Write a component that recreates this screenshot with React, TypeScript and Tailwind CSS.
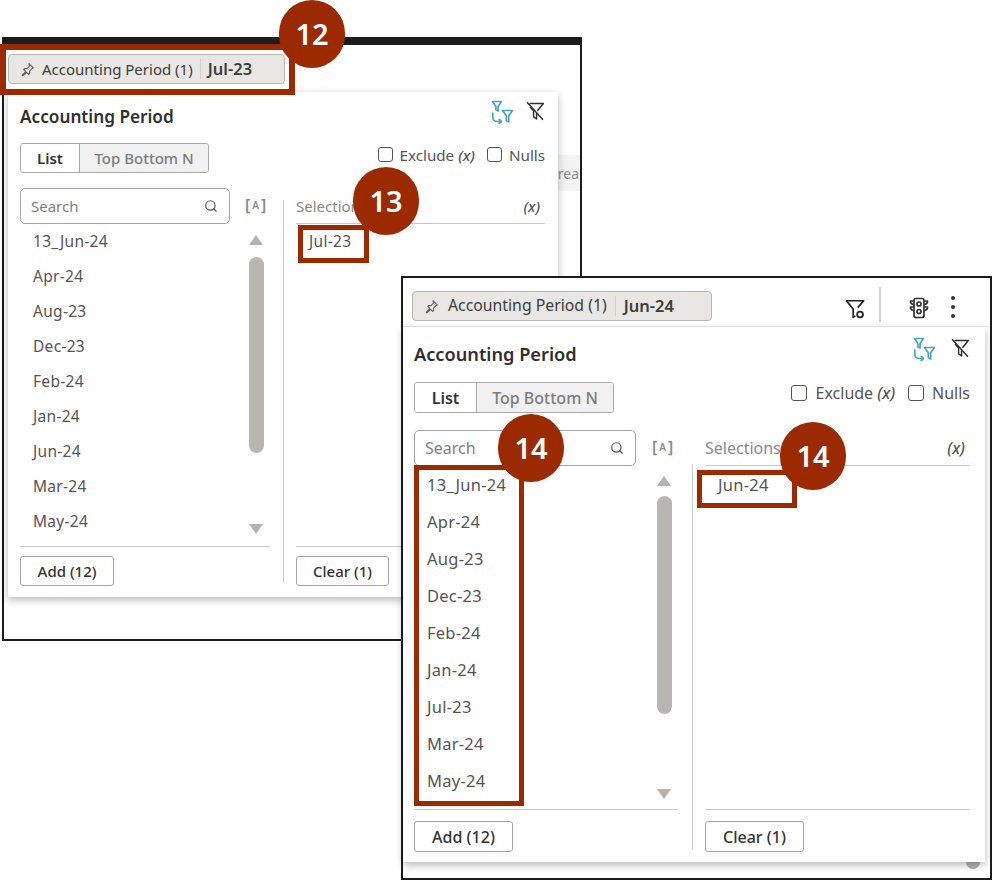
import React from "react";
import { Search } from "lucide-react";

const PinIcon = ({ className }: { className: string }) => (
  <svg viewBox="0 0 16 16" className={className} fill="none" stroke="#5f5f5f" strokeWidth="1.2">
    <path d="M9.6 1.8l4.6 4.6-1.2.5-2.6 2.6-.2 2.8-1 .9-2.2-2.2-3.6 3.6-.9.1.1-.9 3.6-3.6-2.2-2.2.9-1 2.8-.2 2.6-2.6z" strokeLinejoin="round" />
  </svg>
);

const SwapFilterIcon = ({ className }: { className: string }) => (
  <svg viewBox="0 0 24 24" className={className} fill="none" stroke="#4aa3bd" strokeWidth="1.7" strokeLinejoin="round" strokeLinecap="round">
    <path d="M2.5 1.5h9l-3.4 5v4.5l-2.2-1.2V6.500z" />
    <path d="M12.500 10.500h10l-3.800 5.200v6.300l-2.400-1.400v-4.900z" />
    <path d="M2.800 13v4.500c0 2.300 2 4 4.500 4h4" />
    <path d="M9.200 19.300l2.200 2.200-2.200 2" />
  </svg>
);

const NoFilterIcon = ({ className }: { className: string }) => (
  <svg viewBox="0 0 24 24" className={className} fill="none" stroke="#333333" strokeWidth="1.8" strokeLinejoin="round" strokeLinecap="round">
    <path d="M6 3h16l-6.600 8.200" />
    <path d="M6.500 7.500l3.800 4.500v7l3.600 2.500v-6.500" />
    <path d="M3 2l18 20" />
  </svg>
);

const GearFilterIcon = () => (
  <svg viewBox="0 0 24 24" className="w-[22px] h-[22px]" fill="none" stroke="#222222" strokeWidth="1.9" strokeLinejoin="round">
    <path d="M2.500 3h19l-6.500 7.500" />
    <path d="M2.500 3l7.500 9v9l2.500-1.500" />
    <circle cx="17.500" cy="18" r="3.200" />
  </svg>
);

const TrafficIcon = () => (
  <svg viewBox="0 0 24 24" className="w-[24px] h-[24px]" fill="none" stroke="#333333" strokeWidth="1.700" strokeLinejoin="round">
    <rect x="7" y="2.500" width="10" height="19" rx="2" />
    <circle cx="12" cy="8" r="2" />
    <circle cx="12" cy="15.500" r="2" />
    <path d="M7 5H3.500c0 2 1.500 3.500 3.500 3.500M17 5h3.500c0 2-1.500 3.500-3.500 3.500M7 11H3.500c0 2 1.500 3.500 3.500 3.500M17 11h3.500c0 2-1.500 3.500-3.500 3.500" />
  </svg>
);

const Badge = ({ n, className }: { n: number; className: string }) => (
  <div className={`absolute z-20 flex items-center justify-center rounded-full bg-[#9c2a00] text-white font-semibold text-[29px] w-[66px] h-[68px] ${className}`}>
    {n}
  </div>
);

const RedBox = ({ className }: { className: string }) => (
  <div className={`absolute z-10 border-[#9c2a00] ${className}`}></div>
);

interface PillProps {
  value: string;
  className: string;
  label: string;
  iconGap: string;
  sepGap: string;
}

const Pill = ({ value, className, label, iconGap, sepGap }: PillProps) => (
  <div className={`flex items-center h-[30px] rounded-[4px] border border-[#b9b7b3] bg-[#e9e7e4] text-[#3d3d3d] ${className}`}>
    <PinIcon className={`w-[15px] h-[15px] ml-[11px] ${iconGap}`} />
    <span className={label}>Accounting Period (1)</span>
    <span className={`w-px h-[20px] bg-[#d2d0cc] ${sepGap}`}></span>
    <span className="font-semibold text-[16.5px]">{value}</span>
  </div>
);

interface PanelSizes {
  panel: string;
  header: string;
  title: string;
  iconGap: string;
  tabsRow: string;
  tabText: string;
  checks: string;
  boxA: string;
  boxB: string;
  columns: string;
  listCol: string;
  gapCol: string;
  rightCol: string;
  text: string;
  list: string;
  row: string;
  item: string;
  scroll: string;
  thumb: string;
  arrowDown: string;
  foot: string;
  tabList: string;
  tabOther: string;
  addBtn: string;
  clearBtn: string;
  searchW: string;
  bracket: string;
  divider: string;
}

interface PanelProps {
  items: string[];
  selection: string;
  sizes: PanelSizes;
}

const FilterPanel: React.FC<PanelProps> = ({ items, selection, sizes }) => {
  return (
    <div className={`relative z-[1] bg-white shadow-[0_3px_8px_rgba(0,0,0,0.28)] ${sizes.panel}`}>
      <div className={`flex justify-between ${sizes.header}`}>
        <h2 className={`font-semibold text-[#2f2f2f] leading-[24px] ${sizes.title}`}>Accounting Period</h2>
        <div className={`flex -mt-[5px] ${sizes.iconGap}`}>
          <SwapFilterIcon className="w-[24px] h-[24px]" />
          <NoFilterIcon className="w-[20px] h-[20px] mt-[1px]" />
        </div>
      </div>

      <div className={`flex justify-between ${sizes.tabsRow}`}>
        <div className={`flex h-full border border-[#a9a9a9] rounded-[3px] overflow-hidden ${sizes.tabText}`}>
          <div className={`flex items-center justify-center font-semibold text-[#333333] bg-white ${sizes.tabList}`}>List</div>
          <div className={`flex items-center justify-center font-medium text-[#7d7d7d] bg-[#f1f1f1] border-l border-[#a9a9a9] ${sizes.tabOther}`}>Top Bottom N</div>
        </div>
        <div className={`flex items-start leading-[22px] text-[#555555] ${sizes.checks}`}>
          <span className={`mt-[3px] border-[1.5px] border-[#555555] rounded-[3px] ${sizes.boxA}`}></span>
          <span>Exclude <i className="font-medium">(x)</i></span>
          <span className={`mt-[3px] border-[1.5px] border-[#555555] rounded-[3px] ${sizes.boxB}`}></span>
          <span>Nulls</span>
        </div>
      </div>

      <div className={`flex ${sizes.columns}`}>
        <div className={sizes.listCol}>
          <div className="flex h-[36px]">
            <div className={`flex items-center justify-between h-full border border-[#a3a3a3] rounded-[5px] pl-[10px] pr-[11px] text-[#7f7f7f] ${sizes.text} ${sizes.searchW}`}>
              <span>Search</span>
              <Search size={14} color="#555555" strokeWidth={2} />
            </div>
            <span className={`flex items-center h-[34px] font-semibold text-[16px] text-[#8a8a8a] ${sizes.bracket}`}>
              [<span className="text-[10px] mx-[2px]">A</span>]
            </span>
          </div>
          <div className={`flex justify-between ${sizes.list}`}>
            <ul>
              {items.map((item) => (
                <li key={item} className={`flex items-center pl-[13px] text-[#555555] ${sizes.item} ${sizes.row}`}>{item}</li>
              ))}
            </ul>
            <div className={`flex flex-col items-center w-[16px] ${sizes.scroll}`}>
              <span className="w-0 h-0 border-x-[7px] border-x-transparent border-b-[10px] border-b-[#b7b4b0]"></span>
              <span className={`w-[15px] rounded-full bg-[#b9b6b2] ${sizes.thumb}`}></span>
              <span className={`w-0 h-0 border-x-[7px] border-x-transparent border-t-[10px] border-t-[#b7b4b0] ${sizes.arrowDown}`}></span>
            </div>
          </div>
          <div className={`border-t border-[#c9c9c9] ${sizes.foot}`}>
            <button className={`border border-[#a3a3a3] rounded-[3px] font-medium text-[#333333] ${sizes.text} ${sizes.addBtn}`}>Add (12)</button>
          </div>
        </div>

        <div className={`w-px bg-[#cfcfcf] ${sizes.gapCol} ${sizes.divider}`}></div>

        <div className={sizes.rightCol}>
          <div className={`flex items-center justify-between h-[36px] pt-[1px] border-b border-[#c9c9c9] text-[#8a8a8a] ${sizes.text}`}>
            <span>Selections</span>
            <i className="text-[#555555] font-medium pr-[5px]">(x)</i>
          </div>
          <div className={sizes.list}>
            <div className={`flex items-center pl-[13px] text-[#555555] ${sizes.item} ${sizes.row}`}>{selection}</div>
          </div>
          <div className={`border-t border-[#c9c9c9] ${sizes.foot}`}>
            <button className={`border border-[#a3a3a3] rounded-[3px] font-medium text-[#333333] ${sizes.text} ${sizes.clearBtn}`}>Clear (1)</button>
          </div>
        </div>
      </div>
    </div>
  );
};

const backSizes: PanelSizes = {
  panel: "ml-[4px] w-[550px] h-[505px] pl-[12px] pr-[13px]",
  header: "pt-[13px] h-[51px]",
  title: "text-[17.2px]",
  iconGap: "gap-[11px]",
  tabsRow: "h-[30px]",
  tabText: "text-[15px]",
  checks: "text-[15.2px] mt-[1px]",
  boxA: "w-[15px] h-[15px] mr-[7px]",
  boxB: "w-[15px] h-[15px] ml-[12px] mr-[7px]",
  columns: "mt-[15px]",
  listCol: "w-[250px]",
  gapCol: "ml-[13px] mr-[12px]",
  rightCol: "w-[249px]",
  text: "text-[15px]",
  list: "h-[322px]",
  row: "h-[35px]",
  item: "text-[15.5px] tracking-[0.3px]",
  scroll: "pt-[11px] mr-[6px]",
  thumb: "h-[196px] mt-[12px]",
  arrowDown: "mt-[71px]",
  foot: "pt-[9px]",
  tabList: "w-[58px]",
  tabOther: "w-[129px]",
  addBtn: "w-[94px] h-[30px]",
  clearBtn: "w-[93px] h-[30px]",
  searchW: "w-[210px]",
  bracket: "ml-[15px]",
  divider: "mt-[12px] h-[383px]",
};

const frontSizes: PanelSizes = {
  panel: "w-[582px] h-[535px] pl-[11px] pr-[15px]",
  header: "pt-[15px] h-[55px]",
  title: "text-[18.2px]",
  iconGap: "gap-[14px]",
  tabsRow: "h-[31px]",
  tabText: "text-[16px]",
  checks: "text-[16px]",
  boxA: "w-[16px] h-[16px] mr-[9px]",
  boxB: "w-[16px] h-[16px] ml-[13px] mr-[8px]",
  columns: "mt-[17px]",
  listCol: "w-[264px]",
  gapCol: "ml-[14px] mr-[12px]",
  rightCol: "w-[265px]",
  text: "text-[16px]",
  list: "h-[343px]",
  row: "h-[37px] pt-[2px]",
  item: "text-[16.5px] tracking-[0.25px]",
  scroll: "pt-[10px] mr-[6px]",
  thumb: "h-[218px] mt-[10px]",
  arrowDown: "mt-[75px]",
  foot: "pt-[11px]",
  tabList: "w-[61px]",
  tabOther: "w-[137px]",
  addBtn: "w-[99px] h-[31px]",
  clearBtn: "w-[99px] h-[31px]",
  searchW: "w-[222px]",
  bracket: "ml-[16px]",
  divider: "mt-[34px] h-[386px]",
};

export default function App() {
  const backItems = ["13_Jun-24", "Apr-24", "Aug-23", "Dec-23", "Feb-24", "Jan-24", "Jun-24", "Mar-24", "May-24"];
  const frontItems = ["13_Jun-24", "Apr-24", "Aug-23", "Dec-23", "Feb-24", "Jan-24", "Jul-23", "Mar-24", "May-24"];

  return (
    <div className="relative w-[992px] h-[880px] overflow-hidden bg-white font-['Noto_Sans',sans-serif]">
      {/* back window */}
      <div className="absolute left-[2px] top-[37px] w-[580px] h-[604px] border-2 border-t-[8px] border-[#1c1c1c] bg-white">
        <div className="flex h-[47px] pt-[9px] pl-[4px]">
          <Pill value="Jul-23" className="w-[277px]" label="text-[15px]" iconGap="mr-[7px]" sepGap="mx-[7px]" />
        </div>
        <FilterPanel items={backItems} selection="Jul-23" sizes={backSizes} />
        <div className="absolute left-[550px] top-[110px] w-[26px] h-[36px] bg-[#f4f4f4] text-[14px] text-[#8a8a8a] flex items-center">
          <span className="-ml-[4px]">area</span>
        </div>
      </div>
      <RedBox className="left-0 top-[44px] w-[295px] h-[51px] border-[6px]" />
      <Badge n={12} className="left-[279px] top-0" />
      <RedBox className="left-[298px] top-[225px] w-[71px] h-[38px] border-[5px]" />
      <Badge n={13} className="left-[353px] top-[167px]" />

      {/* front window */}
      <div className="absolute left-[401px] top-[276px] z-30 w-[591px] h-[604px] border-2 border-[#1c1c1c] bg-white">
        <div className="flex items-start h-[49px] pt-[13px] pl-[9px] border-b border-[#ececec]">
          <Pill value="Jun-24" className="w-[300px]" label="text-[15.8px]" iconGap="mr-[9px]" sepGap="mx-[8px]" />
          <div className="ml-[132px] mt-[7px]">
            <GearFilterIcon />
          </div>
          <span className="w-[2px] h-[35px] bg-[#d5d5d5] ml-[13px] -mt-[4px]"></span>
          <div className="ml-[26px] mt-[5px]">
            <TrafficIcon />
          </div>
          <div className="ml-[20px] flex flex-col gap-[5px] pt-[5px]">
            <span className="w-[4px] h-[4px] rounded-full bg-[#333333]"></span>
            <span className="w-[4px] h-[4px] rounded-full bg-[#333333]"></span>
            <span className="w-[4px] h-[4px] rounded-full bg-[#333333]"></span>
          </div>
        </div>
        <FilterPanel items={frontItems} selection="Jun-24" sizes={frontSizes} />
        <span className="absolute left-[563px] top-[584px] w-[14px] h-[7px] rounded-b-full bg-[#b5b5b5]"></span>
      </div>
      <div className="absolute inset-0 z-40 pointer-events-none">
        <RedBox className="left-[414px] top-[465px] w-[110px] h-[341px] border-[5px]" />
        <RedBox className="left-[697px] top-[470px] w-[100px] h-[38px] border-[5px]" />
        <Badge n={14} className="left-[498px] top-[414px]" />
        <Badge n={14} className="left-[780px] top-[422px]" />
      </div>
    </div>
  );
}
